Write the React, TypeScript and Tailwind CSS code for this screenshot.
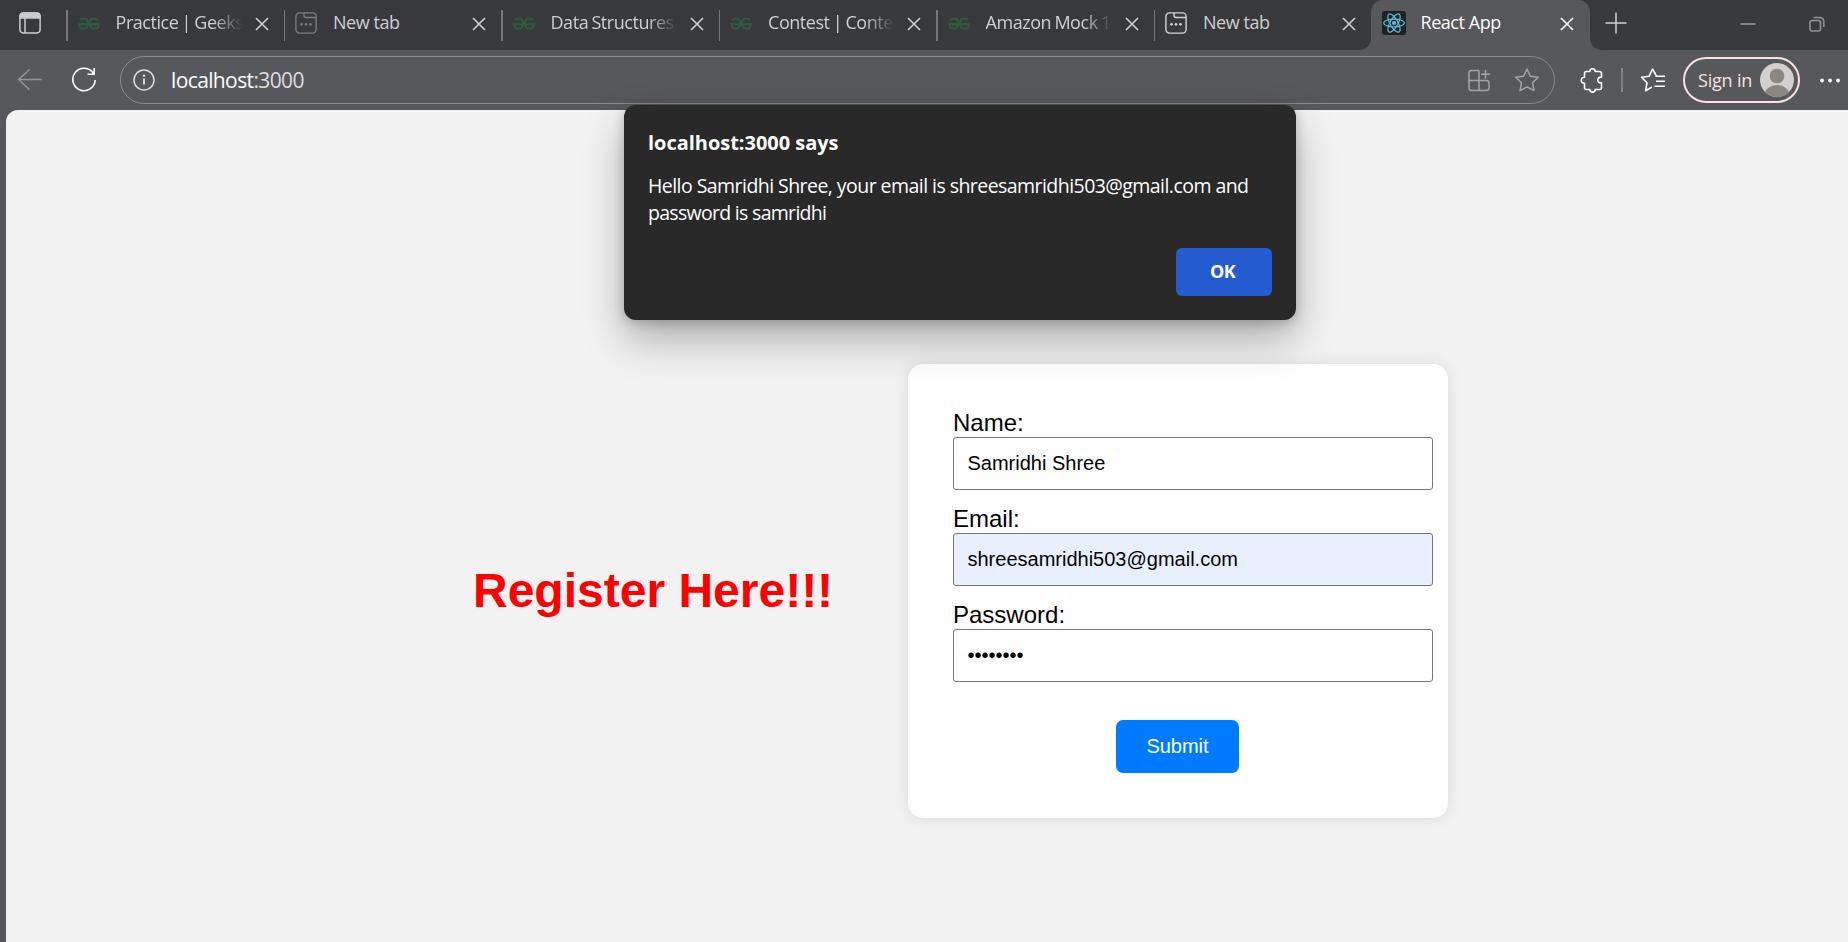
import React from "react";

const ui = "font-['Open_Sans','Noto_Sans',sans-serif]";
const arial = "font-['Liberation_Sans',Arial,sans-serif]";

function GfgIcon() {
  return (
    <svg width="22" height="22" viewBox="0 0 22 22" fill="none" stroke="#305c3e" strokeWidth="1.9">
      <path d="M2 8.2C3 7 4.300 6.700 5.600 6.700C8.500 6.700 10.200 9 10.200 12C10.200 14.800 8.300 16.900 5.500 16.900C2.800 16.900 1.200 15.200 1.200 12.400H20.800C20.800 15.200 19.200 16.900 16.500 16.900C13.700 16.900 11.800 14.800 11.800 12C11.800 9 13.500 6.700 16.400 6.700C17.700 6.700 19 7 20 8.200" transform="translate(0 -.2)" />
    </svg>
  );
}

function NewTabIcon({ color }: { color: string }) {
  return (
    <svg width="22" height="22" viewBox="0 0 22 22" fill="none" stroke={color} strokeWidth="1.4">
      <rect x="0.9" y="0.9" width="20.200" height="20.200" rx="3.500" />
      <path d="M9 1V3.500Q9 5.500 11 5.500H21" />
      <g fill={color} stroke="none">
        <circle cx="6.500" cy="12.300" r="1.350" />
        <circle cx="11" cy="12.300" r="1.350" />
        <circle cx="15.500" cy="12.300" r="1.350" />
      </g>
    </svg>
  );
}

function ReactIcon() {
  return (
    <svg width="24" height="24" viewBox="0 0 24 24">
      <rect width="24" height="24" rx="3" fill="#202124" />
      <g fill="none" stroke="#58c4dc" strokeWidth="1.150">
        <ellipse cx="12" cy="12" rx="10.300" ry="3.900" />
        <ellipse cx="12" cy="12" rx="10.300" ry="3.900" transform="rotate(60 12 12)" />
        <ellipse cx="12" cy="12" rx="10.300" ry="3.900" transform="rotate(120 12 12)" />
      </g>
      <circle cx="12" cy="12" r="2.100" fill="#58c4dc" />
    </svg>
  );
}

function CloseIcon({ color }: { color: string }) {
  return (
    <svg className="shrink-0" width="14" height="14" viewBox="0 0 14 14" stroke={color} strokeWidth="1.600" fill="none">
      <path d="M1 1L13 13M13 1L1 13" />
    </svg>
  );
}

type TabData = { title: string; icon: "gfg" | "new-dim" | "new"; fade?: boolean };

const tabs: TabData[] = [
  { title: "Practice | Geeksf", icon: "gfg", fade: true },
  { title: "New tab", icon: "new-dim" },
  { title: "Data Structures", icon: "gfg", fade: true },
  { title: "Contest | Contes", icon: "gfg", fade: true },
  { title: "Amazon Mock 1", icon: "gfg", fade: true },
  { title: "New tab", icon: "new" },
];

function Tab({ title, icon, fade }: TabData) {
  return (
    <div className="flex h-[50px] w-[217.5px] shrink-0 items-center pb-[4px]">
      <div className="mt-[5px] h-[31px] w-[1.5px] bg-[#77787b]" />
      <div className="ml-[10px] w-[22px]">
        {icon === "gfg" ? <GfgIcon /> : <NewTabIcon color={icon === "new" ? "#d4d4d4" : "#7c7d7f"} />}
      </div>
      <div
        className={
          "-mt-[2px] ml-[16px] w-[127px] overflow-hidden whitespace-nowrap text-[18px] leading-[26px] tracking-[-0.45px] text-[#cfcfcf] " +
          (fade ? "[word-spacing:-1px] [mask-image:linear-gradient(to_right,black_76%,transparent)]" : "")
        }
      >
        {title}
      </div>
      <div className="ml-[12px] mt-[2px]">
        <CloseIcon color="#d0d0d0" />
      </div>
    </div>
  );
}

function TabStrip() {
  return (
    <div className="flex h-[50px] bg-[#38393c]">
      <div className="flex w-[66px] shrink-0 items-center pb-[4px] pl-[19px]">
        <svg width="22" height="22" viewBox="0 0 22 22" fill="none" stroke="#cbcbcb" strokeWidth="1.500">
          <rect x="0.900" y="0.900" width="20.200" height="20.200" rx="3.500" />
          <path d="M1 4.500Q1 1 4.500 1H17.500Q21 1 21 4.500V6H1Z" fill="#cbcbcb" />
          <path d="M6 6V21" />
        </svg>
      </div>
      {tabs.map((t, i) => (
        <Tab key={i} {...t} />
      ))}
      <div className="-ml-[12px] flex h-[50px] w-[12px] items-end overflow-hidden">
        <svg width="12" height="12" viewBox="0 0 12 12">
          <path d="M12 0V12H0C7 12 12 7 12 0Z" fill="#57585c" />
        </svg>
      </div>
      <div className="flex h-[50px] w-[219px] shrink-0 items-center rounded-t-[12px] bg-[#57585c] pb-[4px] pl-[11px]">
        <ReactIcon />
        <div className="-mt-[2px] ml-[14.500px] w-[127px] whitespace-nowrap text-[18px] leading-[26px] tracking-[-0.45px] text-white">
          React App
        </div>
        <div className="ml-[12px] mt-[2px]">
          <CloseIcon color="#ffffff" />
        </div>
      </div>
      <div className="flex items-end">
        <svg width="12" height="12" viewBox="0 0 12 12">
          <path d="M0 0V12H12C5 12 0 7 0 0Z" fill="#57585c" />
        </svg>
      </div>
      <div className="flex items-center pb-[5px] pl-[3px]">
        <svg width="22" height="22" viewBox="0 0 22 22" stroke="#cfcfcf" strokeWidth="1.500">
          <path d="M.5 11H21.500M11 .5V21.500" />
        </svg>
      </div>
      <div className="ml-auto flex items-center gap-[53px] pr-[23px] pb-[2px]">
        <svg width="16" height="16" viewBox="0 0 16 16" stroke="#919294" strokeWidth="1.700">
          <path d="M.5 8H15.500" />
        </svg>
        <svg width="16" height="16" viewBox="0 0 16 16" fill="none" stroke="#919294" strokeWidth="1.600">
          <rect x="1" y="4.500" width="10.500" height="10.500" rx="2" />
          <path d="M4.500 1.500H10.500Q14.800 1.500 14.800 5.800V11" />
        </svg>
      </div>
    </div>
  );
}

function Toolbar() {
  return (
    <div className="flex h-[60px] items-center bg-[#57585c]">
      <svg className="ml-[17px] shrink-0" width="26" height="24" viewBox="0 0 26 24" fill="none" stroke="#929396" strokeWidth="1.500">
        <path d="M25 11.500H1.500M12.700 1.200L1.700 11.500L12.700 21.800" />
      </svg>
      <svg className="ml-[28px] shrink-0" width="26" height="26" viewBox="0 0 26 26" fill="none" stroke="#fff" strokeWidth="1.600">
        <path d="M22.500 6.500A11.200 11.200 0 1 0 24.200 13M23.200 1V7.200H16.500" />
      </svg>
      <div className="ml-[23px] flex h-[48px] w-[1435px] shrink-0 items-center rounded-full border-[1.5px] border-[#8a8b8e]">
        <svg className="ml-[12px] shrink-0" width="22" height="22" viewBox="0 0 22 22" fill="none" stroke="#dcdcdd" strokeWidth="1.500">
          <circle cx="11" cy="11" r="10" />
          <path d="M11 9.500V15.500" strokeWidth="1.900" />
          <circle cx="11" cy="6.700" r="1.200" fill="#dcdcdd" stroke="none" />
        </svg>
        <div className="ml-[16px] text-[21px] leading-[28px] tracking-[-0.62px] text-white">
          localhost<span className="text-[#dededf]">:3000</span>
        </div>
        <svg className="ml-auto shrink-0" width="23" height="23" viewBox="0 0 23 23" fill="none" stroke="#a3a4a6" strokeWidth="1.500">
          <path d="M11 1.500H3.500Q1 1.500 1 4V19Q1 21.500 3.500 21.500H18.500Q21 21.500 21 19V14Q21 11.500 18.500 11.500H1M11 1.500V21.500M17.500 1V9.500M13.200 5.200H22" />
        </svg>
        <svg className="mr-[14px] ml-[23px] shrink-0" width="26" height="26" viewBox="0 0 26 26" fill="none" stroke="#a3a4a6" strokeWidth="1.500" strokeLinejoin="round">
          <path d="M13 2L16.400 9.200L24.300 10.200L18.500 15.700L20 23.600L13 19.800L6 23.600L7.500 15.700L1.700 10.200L9.600 9.200Z" />
        </svg>
      </div>
      <svg className="ml-[25px] shrink-0" width="24" height="26" viewBox="0 0 24 26" fill="none" stroke="#fff" strokeWidth="1.600" strokeLinejoin="round">
        <path d="M6.500 4.500H9.800C9.800 0.900 15.200 0.900 15.200 4.500H19.500Q21.500 4.500 21.500 6.500V10.200C16.500 9.400 16.500 16.600 21.500 15.800V20.500Q21.500 22.500 19.500 22.500H15.200C15.200 26 9.800 26 9.800 22.500H6.500Q4.500 22.500 4.500 20.500V16.200C0.200 16.200 0.200 10.200 4.500 10.200V6.500Q4.500 4.500 6.500 4.500" />
      </svg>
      <div className="ml-[17px] h-[24px] w-[1.5px] shrink-0 bg-[#838487]" />
      <svg className="ml-[17px] shrink-0" width="26" height="26" viewBox="0 0 26 26" fill="none" stroke="#fff" strokeWidth="1.600" strokeLinejoin="round">
        <path d="M16.500 9.200L12.500 2L9.200 9.200L1.500 10.200L7 15.800L5.600 23.700L12 20M15.500 9.200H25M16 14.200H25M14.500 19.200H25" />
      </svg>
      <div className="ml-[17px] flex h-[46px] w-[117px] shrink-0 items-center justify-between rounded-full border-2 border-[#f8e3e1] pr-[3.500px] pl-[13.500px]">
        <span className="text-[18px] tracking-[-0.2px] whitespace-nowrap text-[#f8e3e1]">Sign in</span>
        <svg className="shrink-0" width="34" height="34" viewBox="0 0 34 34">
          <clipPath id="avatar-clip">
            <circle cx="17" cy="17" r="17" />
          </clipPath>
          <g clipPath="url(#avatar-clip)">
            <rect width="34" height="34" fill="#d2d0ce" />
            <circle cx="17" cy="13" r="7.300" fill="#8a8784" />
            <ellipse cx="17" cy="32" rx="12.500" ry="10" fill="#8a8784" />
          </g>
        </svg>
      </div>
      <svg className="ml-[19.500px] shrink-0" width="22" height="6" viewBox="0 0 22 6" fill="#fff">
        <circle cx="3" cy="3.500" r="1.900" />
        <circle cx="11" cy="3.500" r="1.900" />
        <circle cx="19" cy="3.500" r="1.900" />
      </svg>
    </div>
  );
}

function Field({ label, value, type = "text", fill }: { label: string; value: string; type?: string; fill?: boolean }) {
  return (
    <label className="flex w-[480px] flex-col text-[24px] leading-[28px] text-black">
      {label}
      <input
        type={type}
        defaultValue={value}
        className={
          "mb-[15px] h-[53px] w-[480px] rounded-[3px] border border-[#767676] px-[13.500px] text-[20px] outline-none " +
          (fill ? "bg-[#e8f0fe]" : "bg-white")
        }
      />
    </label>
  );
}

function AlertDialog() {
  return (
    <div className="absolute top-[105px] left-[624px] flex h-[215px] w-[672px] flex-col rounded-[12px] bg-[#292929] p-[24px] text-white shadow-[0_20px_42px_rgba(0,0,0,0.28),0_3px_12px_rgba(0,0,0,0.2)]">
      <div className="text-[20px] leading-[28px] font-bold tracking-[-0.03px]">localhost:3000 says</div>
      <div className="mt-[15px] text-[19.5px] leading-[27px] tracking-[-0.55px] whitespace-nowrap">
        Hello Samridhi Shree, your email is shreesamridhi503@gmail.com and
        <br />
        <span className="tracking-[-0.7px]">password is samridhi</span>
      </div>
      <button className="mt-auto h-[48px] w-[96px] self-end rounded-[6px] bg-[#245bd0] pr-[3px] pb-[2px] text-[18px] font-bold tracking-[-0.7px]">
        OK
      </button>
    </div>
  );
}

export default function App() {
  return (
    <div className={"relative flex h-[942px] w-[1848px] flex-col overflow-hidden bg-[#57585c] " + ui}>
      <TabStrip />
      <Toolbar />
      <main className={"ml-[6px] flex flex-1 items-start rounded-tl-[12px] bg-[#f2f2f2] " + arial}>
        <h1 className="mt-[453px] ml-[467px] w-[435px] text-[48px] leading-[55px] font-bold text-[#ff0000]">Register Here!!!</h1>
        <form
          className="mt-[254px] flex h-[454px] w-[540px] flex-col rounded-[15px] bg-white pt-[45px] pl-[45px] shadow-[0_0_15px_rgba(0,0,0,0.1)]"
          onSubmit={(e) => e.preventDefault()}
        >
          <Field label="Name:" value="Samridhi Shree" />
          <Field label="Email:" value="shreesamridhi503@gmail.com" fill />
          <Field label="Password:" value="samridhi" type="password" />
          <button className="mt-[23px] ml-[163px] h-[53px] w-[123px] rounded-[7px] bg-[#007bff] pb-[1px] text-[20px] text-white">
            Submit
          </button>
        </form>
      </main>
      <AlertDialog />
    </div>
  );
}
